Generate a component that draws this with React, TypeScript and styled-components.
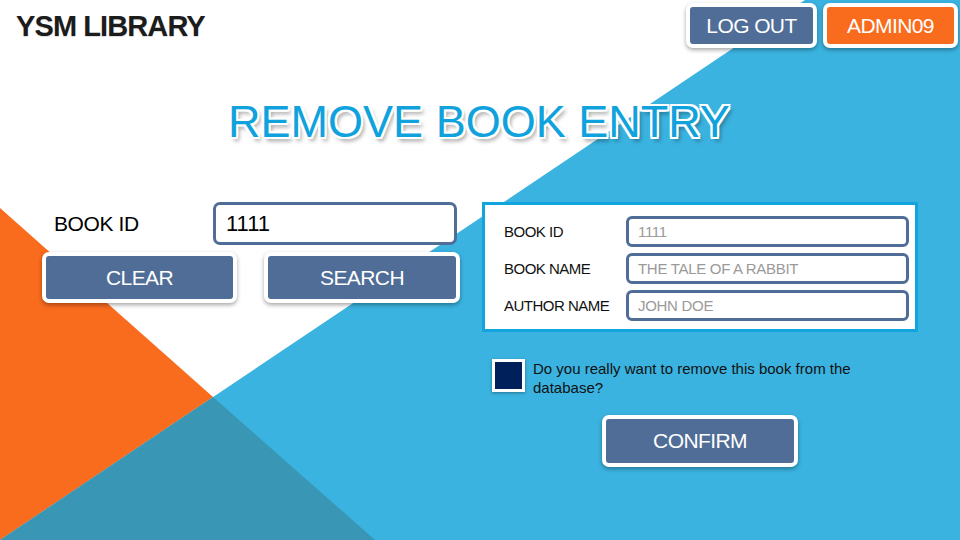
import React from 'react';
import styled, {createGlobalStyle} from 'styled-components';

const GlobalStyle = createGlobalStyle`
  html, body {
    margin: 0;
    padding: 0;
    background: #fff;
  }
  * {
    box-sizing: border-box;
  }
`;

const Root = styled.div`
  position: relative;
  width: 960px;
  height: 540px;
  overflow: hidden;
  background: #fff;
  font-family: "Liberation Sans", Arial, sans-serif;
`;

const Backdrop = styled.svg`
  position: absolute;
  top: 0;
  left: 0;
  width: 960px;
  height: 540px;
  z-index: 0;
`;

const Content = styled.div`
  position: relative;
  z-index: 1;
  display: flex;
  flex-direction: column;
  padding: 3px 2px 0 0;
`;

const Header = styled.div`
  display: flex;
  justify-content: space-between;
  align-items: flex-start;
`;

const Logo = styled.div`
  margin: 9px 0 0 16px;
  font-size: 29px;
  line-height: 1;
  font-weight: 700;
  letter-spacing: -0.9px;
  color: #1c1c1c;
  text-shadow: 0 1px 1px rgba(0, 0, 0, 0.15);
`;

const TopActions = styled.div`
  display: flex;
  gap: 6px;
`;

const Button = styled.button<{$tone?: 'steel' | 'orange'; $w: number; $h: number}>`
  width: ${({$w}) => $w}px;
  height: ${({$h}) => $h}px;
  border: 4px solid #fff;
  border-radius: 7px;
  background: ${({$tone}) => ($tone === 'orange' ? '#f96b1d' : '#4f6d96')};
  color: #fff;
  font-family: "Liberation Sans", Arial, sans-serif;
  font-size: 21px;
  letter-spacing: -0.6px;
  box-shadow: 0 2px 4px rgba(0, 0, 0, 0.35);
  padding: 0;
  cursor: pointer;
`;

const Title = styled.h1`
  margin: 51px 0 0 0;
  text-align: center;
  font-size: 45px;
  line-height: 1;
  font-weight: 400;
  color: #0fa2dd;
  text-shadow:
    -2px -2px 0 #fff, 2px -2px 0 #fff, -2px 2px 0 #fff, 2px 2px 0 #fff,
    0 -2px 0 #fff, 0 2px 0 #fff, -2px 0 0 #fff, 2px 0 0 #fff,
    3px 4px 4px rgba(0, 0, 0, 0.4);
`;

const Main = styled.div`
  display: flex;
  gap: 22px;
  margin-top: 58px;
  padding-left: 42px;
`;

const LeftCol = styled.div`
  width: 418px;
  display: flex;
  flex-direction: column;
  gap: 7px;
`;

const SearchRow = styled.div`
  display: flex;
  align-items: center;
`;

const BigLabel = styled.label`
  width: 171px;
  padding-left: 12px;
  font-size: 21px;
  letter-spacing: -0.4px;
  color: #000;
`;

const BigInput = styled.div`
  width: 244px;
  height: 43px;
  border: 3px solid #4f6d96;
  border-radius: 7px;
  background: #fff;
  display: flex;
  align-items: center;
  padding-left: 10px;
  font-size: 22px;
  color: #000;
`;

const ButtonRow = styled.div`
  display: flex;
  justify-content: space-between;
`;

const RightCol = styled.div`
  width: 436px;
  display: flex;
  flex-direction: column;
  align-items: stretch;
`;

const Panel = styled.div`
  height: 130px;
  border: 3px solid #12a4dd;
  background: #fff;
  display: grid;
  grid-template-columns: 122px 283px;
  grid-auto-rows: 31px;
  row-gap: 6px;
  align-content: center;
  padding: 3px 0 0 19px;
`;

const FieldLabel = styled.div`
  display: flex;
  align-items: center;
  font-size: 15px;
  letter-spacing: -0.5px;
  color: #111;
`;

const FieldValue = styled.div`
  border: 3px solid #4f6d96;
  border-radius: 6px;
  display: flex;
  align-items: center;
  padding-left: 9px;
  font-size: 15px;
  letter-spacing: -0.3px;
  color: #9a9a9a;
`;

const ConfirmRow = styled.label`
  display: flex;
  align-items: flex-start;
  gap: 8px;
  margin: 27px 0 0 10px;
`;

const Check = styled.span`
  flex: none;
  width: 33px;
  height: 33px;
  border: 3px solid #fff;
  background: #00205b;
  box-shadow: 0 1px 3px rgba(0, 0, 0, 0.35);
`;

const ConfirmText = styled.span`
  width: 335px;
  font-size: 15px;
  line-height: 19px;
  color: #111;
`;

const ConfirmWrap = styled.div`
  display: flex;
  justify-content: center;
  margin-top: 18px;
`;

function Background() {
  return (
    <Backdrop viewBox="0 0 960 540" aria-hidden>
      <polygon points="805,0 960,0 960,540 0,540" fill="#3ab3e0" />
      <polygon points="0,208 213,397 0,540" fill="#f96b1d" />
      <polygon points="213,397 375,540 0,540" fill="#3996b4" />
    </Backdrop>
  );
}

const fields = [
  {label: 'BOOK ID', value: '1111'},
  {label: 'BOOK NAME', value: 'THE TALE OF A RABBIT'},
  {label: 'AUTHOR NAME', value: 'JOHN DOE'},
];

export default function App() {
  return (
    <Root>
      <GlobalStyle />
      <Background />
      <Content>
        <Header>
          <Logo>YSM LIBRARY</Logo>
          <TopActions>
            <Button $w={131} $h={45}>LOG OUT</Button>
            <Button $tone="orange" $w={135} $h={45}>ADMIN09</Button>
          </TopActions>
        </Header>
        <Title>REMOVE BOOK ENTRY</Title>
        <Main>
          <LeftCol>
            <SearchRow>
              <BigLabel>BOOK ID</BigLabel>
              <BigInput>1111</BigInput>
            </SearchRow>
            <ButtonRow>
              <Button $w={195} $h={51}>CLEAR</Button>
              <Button $w={196} $h={51}>SEARCH</Button>
            </ButtonRow>
          </LeftCol>
          <RightCol>
            <Panel>
              {fields.map(f => (
                <React.Fragment key={f.label}>
                  <FieldLabel>{f.label}</FieldLabel>
                  <FieldValue>{f.value}</FieldValue>
                </React.Fragment>
              ))}
            </Panel>
            <ConfirmRow>
              <Check />
              <ConfirmText>Do you really want to remove this book from the database?</ConfirmText>
            </ConfirmRow>
            <ConfirmWrap>
              <Button $w={196} $h={52}>CONFIRM</Button>
            </ConfirmWrap>
          </RightCol>
        </Main>
      </Content>
    </Root>
  );
}
